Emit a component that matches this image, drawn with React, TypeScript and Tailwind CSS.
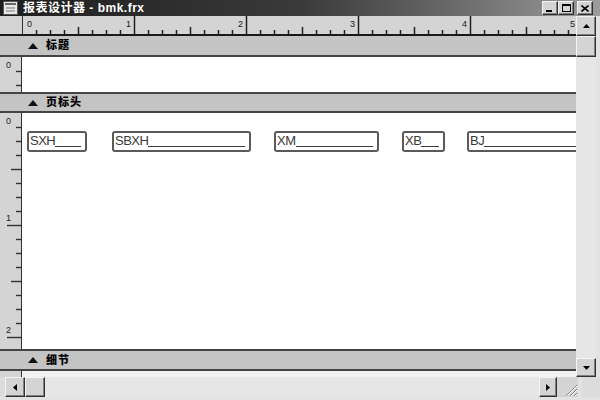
import React from 'react';

const FONT = { fontFamily: '"Liberation Sans", "Noto Sans CJK SC", sans-serif' };

const btn3d =
  'bg-[#d4d4d4] border border-t-[#f4f4f4] border-l-[#f4f4f4] border-r-[#303030] border-b-[#303030] shadow-[inset_-1px_-1px_0_#808080] flex items-center justify-center';

// horizontal ruler: origin at left edge, 112px per inch, ticks every 1/8"
const HRuler: React.FC<{ width: number }> = ({ width }) => {
  const ticks = [];
  for (let i = 1; i * 14 < width; i++) {
    const x = i * 14 + 0.5;
    const h = i % 8 === 0 ? 18 : i % 4 === 0 ? 7 : 4;
    ticks.push(<line key={i} x1={x} x2={x} y1={18 - h} y2={18} stroke="#202020" strokeWidth={1.5} />);
  }
  const labels = [0, 1, 2, 3, 4, 5].map((n) => (
    <text key={n} x={n === 0 ? 5 : n === 5 ? n * 112 - 12 : n * 112 - 8} y={11} fontSize={9} fill="#202020" fontFamily="Liberation Sans, sans-serif">
      {n}
    </text>
  ));
  return (
    <svg width={width} height={18} className="block">
      <line x1={0.5} x2={0.5} y1={0} y2={18} stroke="#303030" />
      {ticks}
      {labels}
    </svg>
  );
};

const VRuler: React.FC<{ height: number }> = ({ height }) => {
  const ticks = [];
  for (let i = 1; i * 14 < height; i++) {
    const y = i * 14 + 0.5;
    const w = i % 8 === 0 ? 14 : i % 4 === 0 ? 10 : 5;
    ticks.push(<line key={i} x1={21 - w} x2={21} y1={y} y2={y} stroke="#303030" strokeWidth={1.4} />);
  }
  const labels = [0, 1, 2]
    .filter((n) => (n === 0 ? 12 : n * 112) < height)
    .map((n) => (
      <text key={n} x={6} y={n === 0 ? 11 : n * 112 - 4} fontSize={9} fill="#202020" fontFamily="Liberation Sans, sans-serif">
        {n}
      </text>
    ));
  return (
    <svg width={21} height={height} className="block">
      {ticks}
      {labels}
    </svg>
  );
};

const Band: React.FC<{ label: string; h: string; top?: boolean }> = ({ label, h, top = true }) => (
  <div
    className={`${h} shrink-0 bg-[#c4c4c4] border-b-2 border-b-[#444] ${top ? 'border-t-2 border-t-[#444]' : ''} flex items-center pl-[28px]`}
  >
    <svg width={10} height={6} className="block">
      <polygon points="0,6 5,0 10,6" fill="#111" />
    </svg>
    <span className="ml-[8px] text-[11px] font-black text-black leading-none tracking-[1px]">{label}</span>
  </div>
);

const Field: React.FC<{ label: string; w: string; ml: string }> = ({ label, w, ml }) => (
  <div className={`${w} ${ml} shrink-0 h-[21px] border-2 border-[#5a5a5a] rounded-[3px] bg-white flex items-end px-[1px] pb-[2px]`}>
    <span className="text-[13px] leading-[14px] text-[#3a3a3a] tracking-[-0.5px]">{label}</span>
    <span className="flex-1 border-b border-[#3a3a3a] mb-[1px] mr-[3px]" />
  </div>
);

export default function App() {
  return (
    <div className="w-[600px] h-[400px] bg-[#dcdcdc] flex flex-col overflow-hidden" style={FONT}>
      {/* title bar */}
      <div className="h-[16px] shrink-0 flex items-center bg-gradient-to-r from-[#1e1e1e] via-[#3a3a3a] to-[#9c9c9c] pl-[3px] pr-[7px]">
        <svg width={15} height={14} className="block shrink-0">
          <rect x={0.5} y={0.5} width={14} height={13} fill="#e8e8e8" stroke="#555" />
          <rect x={2} y={2} width={11} height={2} fill="#666" />
          <line x1={3} x2={12} y1={7} y2={7} stroke="#777" />
          <line x1={3} x2={12} y1={10} y2={10} stroke="#777" />
        </svg>
        <span className="ml-[5px] text-[12px] font-bold text-white leading-none tracking-[0.5px]">报表设计器 - bmk.frx</span>
        <div className="flex-1" />
        <div className={`${btn3d} w-[16px] h-[14px]`}>
          <div className="w-[6px] h-[2px] bg-black mt-[6px] -ml-[2px]" />
        </div>
        <div className={`${btn3d} w-[16px] h-[14px]`}>
          <div className="w-[9px] h-[8px] border border-black border-t-2" />
        </div>
        <div className={`${btn3d} w-[16px] h-[14px] ml-[3px]`}>
          <svg width={8} height={7} className="block">
            <path d="M0.5 0.5 L7.5 6.5 M7.5 0.5 L0.5 6.5" stroke="#000" strokeWidth={1.6} />
          </svg>
        </div>
      </div>

      <div className="h-[361px] shrink-0 flex">
        <div className="w-[576px] shrink-0 flex flex-col overflow-hidden">
          {/* ruler */}
          <div className="h-[20px] shrink-0 flex bg-[#d4d4d4] border-b-2 border-b-[#1a1a1a]">
            <div className="w-[22px] shrink-0" />
            <HRuler width={554} />
          </div>

          <Band label="标题" h="h-[21px]" top={false} />
          <div className="h-[35px] shrink-0 flex">
            <div className="w-[22px] shrink-0 bg-[#d4d4d4] border-r border-[#303030]">
              <VRuler height={35} />
            </div>
            <div className="flex-1 bg-white" />
          </div>

          <Band label="页标头" h="h-[21px]" />
          <div className="h-[236px] shrink-0 flex">
            <div className="w-[22px] shrink-0 bg-[#d4d4d4] border-r border-[#303030]">
              <VRuler height={236} />
            </div>
            <div className="flex-1 bg-white flex items-start pt-[18px] overflow-hidden">
              <Field label="SXH" w="w-[60px]" ml="ml-[5px]" />
              <Field label="SBXH" w="w-[139px]" ml="ml-[25px]" />
              <Field label="XM" w="w-[105px]" ml="ml-[23px]" />
              <Field label="XB" w="w-[43px]" ml="ml-[23px]" />
              <Field label="BJ" w="w-[130px]" ml="ml-[22px]" />
            </div>
          </div>

          <Band label="细节" h="h-[22px]" />
          <div className="flex-1 flex">
            <div className="w-[22px] shrink-0 bg-[#d4d4d4] border-r border-[#303030]" />
            <div className="flex-1 bg-[#f2f2f2]" />
          </div>
        </div>

        {/* vertical scrollbar */}
        <div className="w-[20px] shrink-0 flex flex-col bg-[#e6e6e6]">
          <div className={`${btn3d} h-[20px] shrink-0`}>
            <svg width={7} height={4} className="block">
              <polygon points="0,4 3.5,0 7,4" fill="#000" />
            </svg>
          </div>
          <div className={`${btn3d} h-[21px] shrink-0`} />
          <div className="flex-1" />
          <div className={`${btn3d} h-[19px] shrink-0`}>
            <svg width={7} height={4} className="block">
              <polygon points="0,0 3.5,4 7,0" fill="#000" />
            </svg>
          </div>
        </div>
        <div className="w-[4px] shrink-0 bg-[#e2e2e2]" />
      </div>

      {/* horizontal scrollbar */}
      <div className="h-[20px] shrink-0 flex bg-[#dcdcdc]">
        <div className="w-[5px] shrink-0" />
        <div className="w-[552px] shrink-0 flex bg-[#e6e6e6]">
          <div className={`${btn3d} w-[20px] shrink-0`}>
            <svg width={4} height={7} className="block">
              <polygon points="4,0 0,3.5 4,7" fill="#000" />
            </svg>
          </div>
          <div className={`${btn3d} w-[20px] shrink-0`} />
          <div className="flex-1" />
          <div className={`${btn3d} w-[18px] shrink-0`}>
            <svg width={4} height={7} className="block">
              <polygon points="0,0 4,3.5 0,7" fill="#000" />
            </svg>
          </div>
        </div>
        <div className="w-[21px] shrink-0 bg-[#d4d4d4] flex items-end justify-end">
          <svg width={14} height={14} className="block">
            <path d="M13 2 L2 13 M13 6 L6 13 M13 10 L10 13" stroke="#808080" strokeWidth={1} />
            <path d="M13 3 L3 13 M13 7 L7 13 M13 11 L11 13" stroke="#ffffff" strokeWidth={1} />
          </svg>
        </div>
        <div className="w-[4px] shrink-0 bg-[#e2e2e2]" />
      </div>
      <div className="flex-1 bg-[#e2e2e2]" />
    </div>
  );
}
